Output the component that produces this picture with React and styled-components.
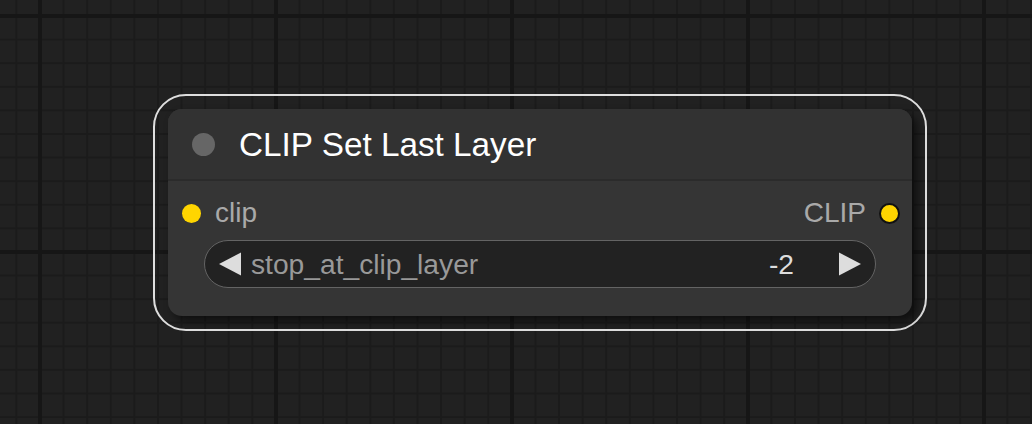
import React from 'react'
import styled, { createGlobalStyle } from 'styled-components'

const GlobalStyle = createGlobalStyle`
  html, body {
    margin: 0;
    padding: 0;
    background: #212121;
  }
  * {
    box-sizing: border-box;
  }
`

const Canvas = styled.div`
  position: relative;
  width: 1032px;
  height: 424px;
  overflow: hidden;
  font-family: "Liberation Sans", Arial, sans-serif;
  background-color: #212121;
  background-image:
    linear-gradient(to right, #161616 4px, transparent 4px),
    linear-gradient(to bottom, #161616 4px, transparent 4px),
    linear-gradient(to right, #1b1b1b 2px, transparent 2px),
    linear-gradient(to bottom, #1b1b1b 2px, transparent 2px);
  background-size: 236px 236px, 236px 236px, 23.6px 23.6px, 23.6px 23.6px;
  background-position: 38px 14px, 38px 14px, 15.4px 15px, 15.4px 15px;
`

/* selection ring around the node; its place on the canvas is the content */
const Selection = styled.div`
  position: absolute;
  left: ${p => p.x}px;
  top: ${p => p.y}px;
  padding: 13px;
  border: 2px solid #dedede;
  border-radius: 33px;
`

const Node = styled.div`
  width: 744px;
  height: 207px;
  display: flex;
  flex-direction: column;
  background: #353535;
  border-radius: 14px;
  box-shadow: 5px 5px 8px rgba(0, 0, 0, 0.55);
  overflow: hidden;
`

const Title = styled.div`
  height: 72px;
  display: flex;
  align-items: center;
  gap: 24px;
  padding-left: 24px;
  background: #323232;
  border-bottom: 2px solid #2b2b2b;
`

const Dot = styled.span`
  flex: none;
  width: ${p => p.size}px;
  height: ${p => p.size}px;
  border-radius: 50%;
  background: ${p => p.color};
  border: ${p => (p.ring ? '2px solid #111' : 'none')};
`

const TitleText = styled.span`
  font-size: 33.3px;
  color: #ffffff;
  white-space: nowrap;
  transform: translateY(1px);
`

const Body = styled.div`
  display: flex;
  flex-direction: column;
  padding: 8px 0 0;
`

const SlotRow = styled.div`
  height: 48px;
  display: flex;
  align-items: center;
  justify-content: space-between;
  padding: 0 12px 0 14px;
`

const Slot = styled.div`
  display: flex;
  align-items: center;
  gap: ${p => p.gap}px;
  font-size: 28px;
  color: #a9a9a9;
`

const Widget = styled.div`
  height: 48px;
  margin: 3px 36px 0;
  display: flex;
  align-items: center;
  padding: 0 14px;
  background: #222222;
  border: 1.5px solid #646464;
  border-radius: 24px;
  font-size: 28.2px;
`

const WidgetLabel = styled.span`
  flex: 1;
  margin-left: 9px;
  color: #999999;
  white-space: nowrap;
`

const WidgetValue = styled.span`
  margin-right: 44px;
  color: #dddddd;
`

const Arrow = ({ dir }) => (
  <svg width="23" height="24" viewBox="0 0 23 24" style={{ flex: 'none' }}>
    <polygon
      points={dir === 'left' ? '0,12 22,0.5 22,23.5' : '23,12 1,0.5 1,23.5'}
      fill="#dddddd"
    />
  </svg>
)

export default function App () {
  return (
    <Canvas>
      <GlobalStyle />
      <Selection x={153} y={94}>
        <Node>
          <Title>
            <Dot size={23} color="#666666" />
            <TitleText>CLIP Set Last Layer</TitleText>
          </Title>
          <Body>
            <SlotRow>
              <Slot gap={14}>
                <Dot size={19} color="#ffd500" />
                clip
              </Slot>
              <Slot gap={13}>
                CLIP
                <Dot size={21} color="#ffd500" ring />
              </Slot>
            </SlotRow>
            <Widget>
              <Arrow dir="left" />
              <WidgetLabel>stop_at_clip_layer</WidgetLabel>
              <WidgetValue>-2</WidgetValue>
              <Arrow dir="right" />
            </Widget>
          </Body>
        </Node>
      </Selection>
    </Canvas>
  )
}
